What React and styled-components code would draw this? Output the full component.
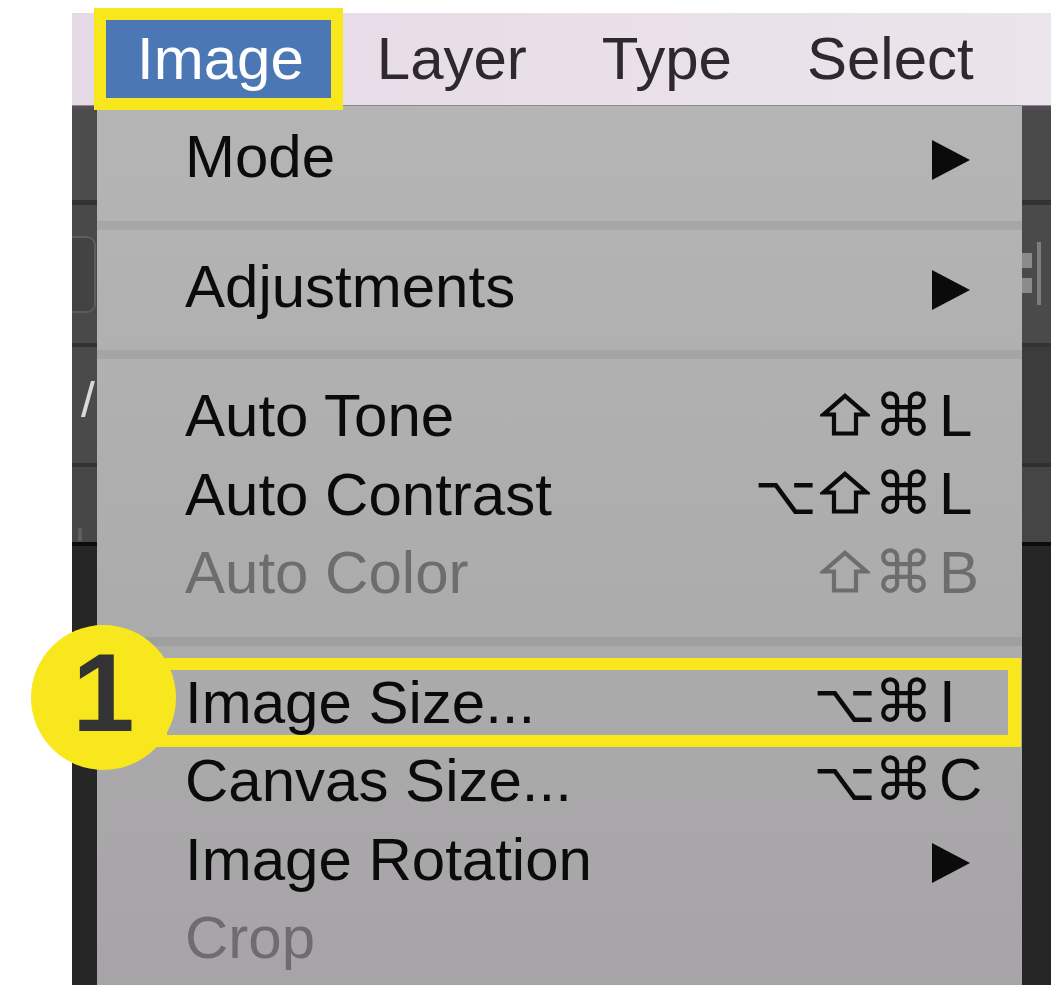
import React from 'react';
import styled, { createGlobalStyle } from 'styled-components';

const Global = createGlobalStyle`
  html, body { margin: 0; padding: 0; background: #ffffff; }
  body { font-family: "Liberation Sans", Arial, sans-serif; }
`;

const Screen = styled.div`
  margin: 13px 0 0 72px;
  height: 972px;
  display: flex;
  flex-direction: column;
`;

const MenuBar = styled.div`
  height: 93px;
  box-sizing: border-box;
  flex-shrink: 0;
  border-bottom: 1px solid #8d898d;
  background: linear-gradient(90deg, #e6d9e6, #ebe5eb);
  display: flex;
  align-items: center;
  gap: 17px;
  padding-left: 34px;
  position: relative;
  z-index: 2;
`;

const MenuTitle = styled.div`
  height: 78px;
  line-height: 78px;
  padding: ${(p) => (p.$active ? '0 27px 0 31px' : '0 29px')};
  font-size: 60px;
  white-space: nowrap;
  color: ${(p) => (p.$active ? '#ffffff' : '#2d292d')};
  background: ${(p) => (p.$active ? '#4b78b4' : 'transparent')};
  box-shadow: ${(p) => (p.$active ? '0 0 0 12px #f8e71c' : 'none')};
`;

const Workspace = styled.div`
  flex: 1;
  display: flex;
  min-height: 0;
`;

const Chrome = styled.div`
  width: ${(p) => p.$w}px;
  flex: ${(p) => (p.$grow ? 1 : 'none')};
  display: flex;
  flex-direction: column;
  overflow: hidden;
`;

const Band = styled.div`
  height: ${(p) => (p.$h ? `${p.$h}px` : 'auto')};
  flex: ${(p) => (p.$h ? 'none' : 1)};
  background: ${(p) => p.$bg};
  display: flex;
  align-items: ${(p) => p.$align || 'center'};
`;

const ToolField = styled.div`
  width: 40px;
  height: 73px;
  margin-left: -20px;
  flex-shrink: 0;
  border: 2px solid #5c5c5c;
  border-radius: 9px;
  background: #434343;
`;

const Slash = styled.span`
  font-size: 50px;
  color: #d9d9d9;
  margin-left: 9px;
  margin-top: -10px;
`;

const Tick = styled.div`
  width: 4px;
  height: 13px;
  margin: 0 0 1px 6px;
  background: #5e5e5e;
`;

const PanelIcons = styled.div`
  display: flex;
  align-items: center;
  gap: 5px;
  margin-top: -2px;
`;

const Squares = styled.div`
  display: flex;
  flex-direction: column;
  gap: 10px;
`;

const Square = styled.div`
  width: 10px;
  height: 15px;
  background: #8b8b8b;
`;

const VBar = styled.div`
  width: 4px;
  height: 63px;
  background: #7d7d7d;
`;

const MenuPanel = styled.div`
  width: 925px;
  flex-shrink: 0;
  box-sizing: border-box;
  padding-top: 12px;
  background: linear-gradient(180deg, #b6b5b6 0%, #aeadae 50%, #a6a4a6 100%);
  display: flex;
  flex-direction: column;
  position: relative;
  z-index: 1;
`;

const Row = styled.div`
  position: relative;
  display: flex;
  align-items: center;
  height: 78.5px;
  flex-shrink: 0;
  padding: 0 39px 0 88px;
  font-size: 60px;
  line-height: 78.5px;
  white-space: nowrap;
  color: ${(p) => (p.$disabled ? '#6e6c6e' : '#0b0b0b')};

  ${(p) =>
    p.$highlight &&
    `
    &::after {
      content: '';
      position: absolute;
      top: -6px;
      bottom: -5px;
      left: 58px;
      right: 1px;
      border: 12px solid #f8e71c;
      border-right-width: 13px;
      pointer-events: none;
    }
  `}
`;

const Label = styled.span`
  flex: 1;
`;

const Separator = styled.div`
  height: 51px;
  flex-shrink: 0;
  background: linear-gradient(
    180deg,
    transparent 24px,
    rgba(0, 0, 0, 0.07) 24px,
    rgba(0, 0, 0, 0.07) 33px,
    transparent 33px
  );
`;

const Shortcut = styled.span`
  display: flex;
  align-items: baseline;
`;

const ModKey = styled.span`
  width: 59px;
  display: inline-flex;
  justify-content: center;
  font-family: "DejaVu Sans", sans-serif;
  font-size: ${(p) => (p.$cmd ? 59 : 54)}px;
`;

const ShiftIcon = styled.svg`
  width: 50px;
  height: 43px;
  align-self: flex-end;
  margin-bottom: 16px;
`;

const Key = styled.span`
  width: 44px;
  margin-left: 6px;
  text-align: left;
`;

const Submenu = styled.span`
  width: 0;
  height: 0;
  border-left: 38px solid currentColor;
  border-top: 20px solid transparent;
  border-bottom: 20px solid transparent;
  margin: 6px 13px 0 0;
`;

const Badge = styled.div`
  position: absolute;
  left: -66px;
  top: -39px;
  width: 145px;
  height: 145px;
  border-radius: 50%;
  background: #f8e71c;
  display: flex;
  align-items: center;
  justify-content: center;
  box-sizing: border-box;
  padding-bottom: 8px;
  font-size: 112px;
  font-weight: 700;
  line-height: 1;
  color: #333333;
  z-index: 3;
`;

const Shift = () => (
  <ModKey role="img" aria-label="⇧">
    <ShiftIcon viewBox="0 0 50 43" aria-hidden="true">
      <path
        d="M25 2.8 L46.5 21.5 L36 21.5 L36 40.5 L14 40.5 L14 21.5 L3.5 21.5 Z"
        fill="none"
        stroke="currentColor"
        strokeWidth="4.2"
        strokeLinejoin="miter"
      />
    </ShiftIcon>
  </ModKey>
);

const Mod = ({ m }) => {
  if (m === 'shift') return <Shift />;
  if (m === 'cmd') return <ModKey $cmd>⌘</ModKey>;
  return <ModKey>⌥</ModKey>;
};

const groups = [
  [{ label: 'Mode', submenu: true }],
  [{ label: 'Adjustments', submenu: true }],
  [
    { label: 'Auto Tone', mods: ['shift', 'cmd'], key: 'L' },
    { label: 'Auto Contrast', mods: ['opt', 'shift', 'cmd'], key: 'L' },
    { label: 'Auto Color', mods: ['shift', 'cmd'], key: 'B', disabled: true },
  ],
  [
    { label: 'Image Size...', mods: ['opt', 'cmd'], key: 'I', highlight: true, badge: '1' },
    { label: 'Canvas Size...', mods: ['opt', 'cmd'], key: 'C' },
    { label: 'Image Rotation', submenu: true },
    { label: 'Crop', disabled: true },
  ],
];

const MenuItem = ({ item }) => (
  <Row $disabled={item.disabled} $highlight={item.highlight}>
    {item.badge && <Badge>{item.badge}</Badge>}
    <Label>{item.label}</Label>
    {item.mods && (
      <Shortcut>
        {item.mods.map((m) => (
          <Mod key={m} m={m} />
        ))}
        <Key>{item.key}</Key>
      </Shortcut>
    )}
    {item.submenu && <Submenu />}
  </Row>
);

export default function App() {
  return (
    <>
      <Global />
      <Screen>
        <MenuBar>
          <MenuTitle $active>Image</MenuTitle>
          <MenuTitle>Layer</MenuTitle>
          <MenuTitle>Type</MenuTitle>
          <MenuTitle>Select</MenuTitle>
        </MenuBar>
        <Workspace>
          <Chrome $w={25}>
            <Band $h={3} $bg="#5a4a58" />
            <Band $h={91} $bg="#4b4b4b" />
            <Band $h={5} $bg="#333333" />
            <Band $h={138} $bg="#494949">
              <ToolField />
            </Band>
            <Band $h={4} $bg="#333333" />
            <Band $h={116} $bg="#4a4a4a">
              <Slash>/</Slash>
            </Band>
            <Band $h={4} $bg="#333333" />
            <Band $h={75} $bg="#474747" $align="flex-end">
              <Tick />
            </Band>
            <Band $h={4} $bg="#0c0c0c" />
            <Band $bg="#262626" />
          </Chrome>
          <MenuPanel>
            {groups.map((g, gi) => (
              <React.Fragment key={gi}>
                {gi > 0 && <Separator />}
                {g.map((item) => (
                  <MenuItem key={item.label} item={item} />
                ))}
              </React.Fragment>
            ))}
          </MenuPanel>
          <Chrome $grow>
            <Band $h={4} $bg="#56495a" />
            <Band $h={90} $bg="#4a4a4a" />
            <Band $h={5} $bg="#333333" />
            <Band $h={138} $bg="#4a4a4a">
              <PanelIcons>
                <Squares>
                  <Square />
                  <Square />
                </Squares>
                <VBar />
              </PanelIcons>
            </Band>
            <Band $h={4} $bg="#333333" />
            <Band $h={116} $bg="#3c3c3c" />
            <Band $h={4} $bg="#303030" />
            <Band $h={75} $bg="#454545" />
            <Band $h={4} $bg="#0c0c0c" />
            <Band $bg="#262626" />
          </Chrome>
        </Workspace>
      </Screen>
    </>
  );
}
